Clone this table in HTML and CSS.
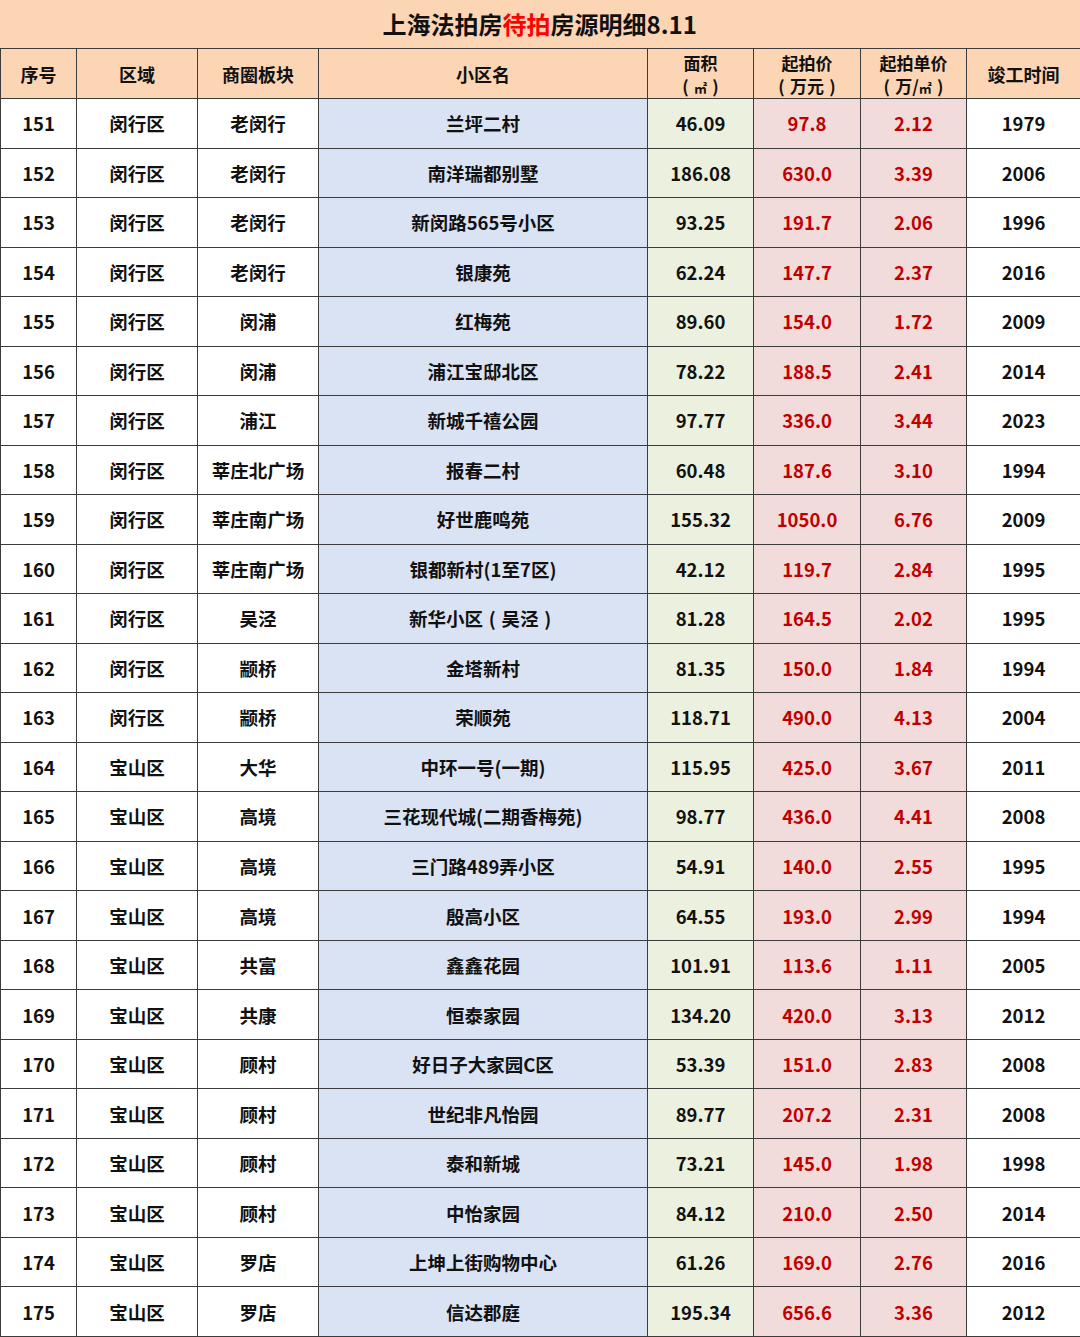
FILE: index.html
```html
<!DOCTYPE html>
<html lang="zh-CN">
<head>
<meta charset="utf-8">
<title>上海法拍房待拍房源明细8.11</title>
<link rel="stylesheet" href="styles.css">
</head>
<body>
<div class="sheet">
  <div class="title">上海法拍房<span class="red">待拍</span>房源明细8.11</div>
  <div class="h">序号</div><div class="h">区域</div><div class="h">商圈板块</div><div class="h">小区名</div>
  <div class="h two">面积<br><span class="p">(</span><span class="sq">㎡</span><span class="p">)</span></div><div class="h two">起拍价<br><span class="p">(</span>万元<span class="p">)</span></div><div class="h two">起拍单价<br><span class="p">(</span>万/<span class="sq">㎡</span><span class="p">)</span></div><div class="h">竣工时间</div>

  <div class="c">151</div><div class="c">闵行区</div><div class="c">老闵行</div><div class="c nm">兰坪二村</div><div class="c ar">46.09</div><div class="c pr">97.8</div><div class="c pr">2.12</div><div class="c">1979</div>
  <div class="c">152</div><div class="c">闵行区</div><div class="c">老闵行</div><div class="c nm">南洋瑞都别墅</div><div class="c ar">186.08</div><div class="c pr">630.0</div><div class="c pr">3.39</div><div class="c">2006</div>
  <div class="c">153</div><div class="c">闵行区</div><div class="c">老闵行</div><div class="c nm">新闵路565号小区</div><div class="c ar">93.25</div><div class="c pr">191.7</div><div class="c pr">2.06</div><div class="c">1996</div>
  <div class="c">154</div><div class="c">闵行区</div><div class="c">老闵行</div><div class="c nm">银康苑</div><div class="c ar">62.24</div><div class="c pr">147.7</div><div class="c pr">2.37</div><div class="c">2016</div>
  <div class="c">155</div><div class="c">闵行区</div><div class="c">闵浦</div><div class="c nm">红梅苑</div><div class="c ar">89.60</div><div class="c pr">154.0</div><div class="c pr">1.72</div><div class="c">2009</div>
  <div class="c">156</div><div class="c">闵行区</div><div class="c">闵浦</div><div class="c nm">浦江宝邸北区</div><div class="c ar">78.22</div><div class="c pr">188.5</div><div class="c pr">2.41</div><div class="c">2014</div>
  <div class="c">157</div><div class="c">闵行区</div><div class="c">浦江</div><div class="c nm">新城千禧公园</div><div class="c ar">97.77</div><div class="c pr">336.0</div><div class="c pr">3.44</div><div class="c">2023</div>
  <div class="c">158</div><div class="c">闵行区</div><div class="c">莘庄北广场</div><div class="c nm">报春二村</div><div class="c ar">60.48</div><div class="c pr">187.6</div><div class="c pr">3.10</div><div class="c">1994</div>
  <div class="c">159</div><div class="c">闵行区</div><div class="c">莘庄南广场</div><div class="c nm">好世鹿鸣苑</div><div class="c ar">155.32</div><div class="c pr">1050.0</div><div class="c pr">6.76</div><div class="c">2009</div>
  <div class="c">160</div><div class="c">闵行区</div><div class="c">莘庄南广场</div><div class="c nm">银都新村(1至7区)</div><div class="c ar">42.12</div><div class="c pr">119.7</div><div class="c pr">2.84</div><div class="c">1995</div>
  <div class="c">161</div><div class="c">闵行区</div><div class="c">吴泾</div><div class="c nm">新华小区<span class="p">(</span>吴泾<span class="p">)</span></div><div class="c ar">81.28</div><div class="c pr">164.5</div><div class="c pr">2.02</div><div class="c">1995</div>
  <div class="c">162</div><div class="c">闵行区</div><div class="c">颛桥</div><div class="c nm">金塔新村</div><div class="c ar">81.35</div><div class="c pr">150.0</div><div class="c pr">1.84</div><div class="c">1994</div>
  <div class="c">163</div><div class="c">闵行区</div><div class="c">颛桥</div><div class="c nm">荣顺苑</div><div class="c ar">118.71</div><div class="c pr">490.0</div><div class="c pr">4.13</div><div class="c">2004</div>
  <div class="c">164</div><div class="c">宝山区</div><div class="c">大华</div><div class="c nm">中环一号(一期)</div><div class="c ar">115.95</div><div class="c pr">425.0</div><div class="c pr">3.67</div><div class="c">2011</div>
  <div class="c">165</div><div class="c">宝山区</div><div class="c">高境</div><div class="c nm">三花现代城(二期香梅苑)</div><div class="c ar">98.77</div><div class="c pr">436.0</div><div class="c pr">4.41</div><div class="c">2008</div>
  <div class="c">166</div><div class="c">宝山区</div><div class="c">高境</div><div class="c nm">三门路489弄小区</div><div class="c ar">54.91</div><div class="c pr">140.0</div><div class="c pr">2.55</div><div class="c">1995</div>
  <div class="c">167</div><div class="c">宝山区</div><div class="c">高境</div><div class="c nm">殷高小区</div><div class="c ar">64.55</div><div class="c pr">193.0</div><div class="c pr">2.99</div><div class="c">1994</div>
  <div class="c">168</div><div class="c">宝山区</div><div class="c">共富</div><div class="c nm">鑫鑫花园</div><div class="c ar">101.91</div><div class="c pr">113.6</div><div class="c pr">1.11</div><div class="c">2005</div>
  <div class="c">169</div><div class="c">宝山区</div><div class="c">共康</div><div class="c nm">恒泰家园</div><div class="c ar">134.20</div><div class="c pr">420.0</div><div class="c pr">3.13</div><div class="c">2012</div>
  <div class="c">170</div><div class="c">宝山区</div><div class="c">顾村</div><div class="c nm">好日子大家园C区</div><div class="c ar">53.39</div><div class="c pr">151.0</div><div class="c pr">2.83</div><div class="c">2008</div>
  <div class="c">171</div><div class="c">宝山区</div><div class="c">顾村</div><div class="c nm">世纪非凡怡园</div><div class="c ar">89.77</div><div class="c pr">207.2</div><div class="c pr">2.31</div><div class="c">2008</div>
  <div class="c">172</div><div class="c">宝山区</div><div class="c">顾村</div><div class="c nm">泰和新城</div><div class="c ar">73.21</div><div class="c pr">145.0</div><div class="c pr">1.98</div><div class="c">1998</div>
  <div class="c">173</div><div class="c">宝山区</div><div class="c">顾村</div><div class="c nm">中怡家园</div><div class="c ar">84.12</div><div class="c pr">210.0</div><div class="c pr">2.50</div><div class="c">2014</div>
  <div class="c">174</div><div class="c">宝山区</div><div class="c">罗店</div><div class="c nm">上坤上街购物中心</div><div class="c ar">61.26</div><div class="c pr">169.0</div><div class="c pr">2.76</div><div class="c">2016</div>
  <div class="c">175</div><div class="c">宝山区</div><div class="c">罗店</div><div class="c nm">信达郡庭</div><div class="c ar">195.34</div><div class="c pr">656.6</div><div class="c pr">3.36</div><div class="c">2012</div>
</div>
</body>
</html>
```
FILE: styles.css
```css
html, body {
  margin: 0;
  padding: 0;
  background: #ffffff;
}
.sheet {
  width: 1080px;
  display: grid;
  grid-template-columns: 76px 121px 121px 329px 106px 107px 106px 114px;
  grid-template-rows: 49px 50px repeat(25, 49.52px);
  font-family: "Noto Sans CJK SC", "Noto Sans", sans-serif;
  font-weight: 700;
  color: #111111;
  border-left: 1.5px solid #3c3c3c;
  box-sizing: border-box;
}
.title {
  grid-column: 1 / -1;
  background: #fcd5b4;
  display: flex;
  align-items: center;
  justify-content: center;
  font-size: 24px;
  border-bottom: 1.5px solid #3c3c3c;
  border-right: 1.5px solid #3c3c3c;
  margin-left: -1.5px;
  padding-bottom: 2px;
}
.red { color: #ff0000; }
.h, .c {
  box-sizing: border-box;
  border-right: 1.5px solid #3c3c3c;
  border-bottom: 1.5px solid #3c3c3c;
  text-align: center;
  font-size: 18px;
  white-space: nowrap;
}
.c, .h:not(.two) {
  display: flex;
  align-items: center;
  justify-content: center;
}
.h {
  background: #fcd5b4;
  font-size: 18px;
}
.h.two {
  line-height: 23px;
  font-size: 17px;
  padding-top: 2px;
}
.p {
  display: inline-block;
  width: 1em;
  text-align: center;
  font-weight: 700;
}
.sq { font-size: 13px; }
.c { font-size: 18.5px; }
.nm { background: #dae3f3; }
.ar { background: #ebf1de; }
.pr { background: #f2dcdb; color: #c00000; }
```
